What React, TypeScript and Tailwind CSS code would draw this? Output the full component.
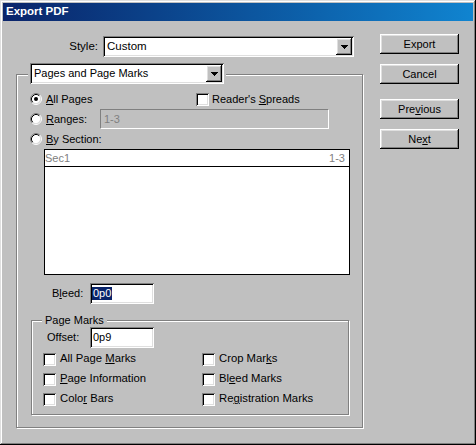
const sunken =
  "shadow-[inset_1px_1px_#808080,inset_-1px_-1px_#fff,inset_2px_2px_#000,inset_-2px_-2px_#dfdfdf]";
const raised =
  "shadow-[inset_-1px_-1px_#000,inset_1px_1px_#fff,inset_-2px_-2px_#808080,inset_2px_2px_#dfdfdf]";
const etched = "border border-[#808080] shadow-[inset_1px_1px_#fff,1px_1px_#fff]";

function Radio({ checked }: { checked?: boolean }) {
  return (
    <svg width="12" height="12" viewBox="0 0 12 12" className="shrink-0">
      <circle cx="6" cy="6" r="4.5" fill="#fff" />
      <path d="M9.89 2.11A5.5 5.5 0 0 0 2.11 9.89" fill="none" stroke="#808080" />
      <path d="M2.11 9.89A5.5 5.5 0 0 0 9.89 2.11" fill="none" stroke="#fff" />
      <path d="M9.18 2.82A4.5 4.5 0 0 0 2.82 9.18" fill="none" stroke="#000" />
      <path d="M2.82 9.18A4.5 4.5 0 0 0 9.18 2.82" fill="none" stroke="#dfdfdf" />
      {checked && <circle cx="6" cy="6" r="2" fill="#000" />}
    </svg>
  );
}

function Check() {
  return <div className={`w-[13px] h-[13px] shrink-0 bg-white ${sunken}`} />;
}

function ArrowBtn() {
  return (
    <div className={`w-[16px] h-[17px] bg-[#c0c0c0] flex items-center justify-center ${raised}`}>
      <svg width="7" height="4" viewBox="0 0 7 4" shapeRendering="crispEdges">
        <rect x="0" y="0" width="7" height="1" fill="#000" />
        <rect x="1" y="1" width="5" height="1" fill="#000" />
        <rect x="2" y="2" width="3" height="1" fill="#000" />
        <rect x="3" y="3" width="1" height="1" fill="#000" />
      </svg>
    </div>
  );
}

function Button({ children }: { children: React.ReactNode }) {
  return (
    <div className={`h-[20px] w-[79px] bg-[#c0c0c0] flex items-center justify-center ${raised}`}>
      {children}
    </div>
  );
}

function CheckRow({ children, width }: { children: React.ReactNode; width?: string }) {
  return (
    <div className={`flex items-center gap-[4px] ${width ?? ""}`}>
      <Check />
      <span className="text-[11.3px]">{children}</span>
    </div>
  );
}

export default function App() {
  return (
    <div className="w-[476px] h-[445px] bg-[#c0c0c0] p-[3px] font-['Liberation_Sans',Arial,sans-serif] text-[11px] leading-none text-black shadow-[inset_-1px_-1px_#000,inset_1px_1px_#dfdfdf,inset_-2px_-2px_#808080,inset_2px_2px_#fff]">
      <div className="h-[18px] bg-gradient-to-r from-[#0a246a] to-[#1084d0] flex items-center pl-[3px] text-white font-bold text-[11.5px]">
        Export PDF
      </div>

      <div className="flex">
        {/* left column */}
        <div className="ml-[13px] w-[349px]">
          <div className="mt-[15px] flex items-center">
            <span className="w-[82px] text-right text-[11.5px]">Style:</span>
            <div className={`ml-[5px] w-[251px] h-[21px] bg-white flex items-center justify-between pl-[4px] pr-[2px] ${sunken}`}>
              <span className="text-[11.5px]">Custom</span>
              <ArrowBtn />
            </div>
          </div>

          <div className="relative mt-[6px] pt-[11px]">
            <div className={`w-[347px] h-[354px] ${etched}`}>
              <div className="mt-[14px] pl-[13px]">
                <div className="h-[20px] flex items-center">
                  <div className="w-[166px] flex items-center gap-[4px]">
                    <Radio checked />
                    <span>
                      <u>A</u>ll Pages
                    </span>
                  </div>
                  <div className="flex items-center gap-[3px]">
                    <Check />
                    <span>
                      Reader's <u>S</u>preads
                    </span>
                  </div>
                </div>
                <div className="h-[20px] flex items-center">
                  <div className="w-[70px] flex items-center gap-[4px]">
                    <Radio />
                    <span>
                      <u>R</u>anges:
                    </span>
                  </div>
                  <div className="w-[229px] h-[20px] border border-[#808080] border-r-white border-b-white flex items-center pl-[3px] text-[#808080]">
                    1-3
                  </div>
                </div>
                <div className="h-[20px] flex items-center gap-[4px]">
                  <Radio />
                  <span>
                    <u>B</u>y Section:
                  </span>
                </div>
              </div>

              <div className="ml-[27px] w-[306px] h-[126px] bg-white border border-black">
                <div className="h-[17px] border-b border-black flex items-center justify-between pr-[4px] text-[#808080]">
                  <span>Sec1</span>
                  <span>1-3</span>
                </div>
              </div>

              <div className="mt-[8px] flex items-center">
                <span className="ml-[35px] w-[38px]">
                  B<u>l</u>eed:
                </span>
                <div className={`w-[64px] h-[21px] bg-white flex items-center pl-[2px] ${sunken}`}>
                  <span className="bg-[#0a246a] text-white px-[1px] py-[1px]">0p0</span>
                </div>
              </div>

              <div className="relative mt-[10px] ml-[14px] pt-[6px]">
                <div className={`w-[318px] h-[95px] ${etched}`}>
                  <div className="mt-[6px] flex items-center">
                    <span className="ml-[15px] w-[43px]">Offset:</span>
                    <div className={`w-[64px] h-[21px] bg-white flex items-center pl-[3px] ${sunken}`}>
                      0p9
                    </div>
                  </div>
                  <div className="mt-[1px] pl-[11px] flex flex-col">
                    <div className="h-[20px] flex items-center">
                      <CheckRow width="w-[159px]">
                        All Page <u>M</u>arks
                      </CheckRow>
                      <CheckRow>
                        Crop Mar<u>k</u>s
                      </CheckRow>
                    </div>
                    <div className="h-[20px] flex items-center">
                      <CheckRow width="w-[159px]">
                        <u>P</u>age Information
                      </CheckRow>
                      <CheckRow>
                        Bl<u>e</u>ed Marks
                      </CheckRow>
                    </div>
                    <div className="h-[20px] flex items-center">
                      <CheckRow width="w-[159px]">
                        Colo<u>r</u> Bars
                      </CheckRow>
                      <CheckRow>
                        Re<u>g</u>istration Marks
                      </CheckRow>
                    </div>
                  </div>
                </div>
                <span className="absolute left-[11px] top-0 px-[3px] bg-[#c0c0c0] leading-[12px]">
                  Page Marks
                </span>
              </div>
            </div>

            <div className="absolute left-[12px] top-0 px-[2px] bg-[#c0c0c0]">
              <div className={`w-[194px] h-[21px] bg-white flex items-center justify-between pl-[4px] pr-[2px] ${sunken}`}>
                <span>Pages and Page Marks</span>
                <ArrowBtn />
              </div>
            </div>
          </div>
        </div>

        {/* right column */}
        <div className="ml-[15px] mt-[13px] flex flex-col">
          <Button>Export</Button>
          <div className="mt-[10px]">
            <Button>Cancel</Button>
          </div>
          <div className="mt-[15px]">
            <Button>
              <span>
                Pre<u>v</u>ious
              </span>
            </Button>
          </div>
          <div className="mt-[10px]">
            <Button>
              <span>
                Ne<u>x</u>t
              </span>
            </Button>
          </div>
        </div>
      </div>
    </div>
  );
}
